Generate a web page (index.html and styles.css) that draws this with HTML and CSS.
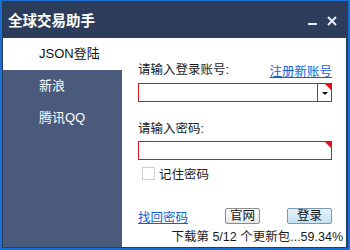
FILE: index.html
```html
<!DOCTYPE html>
<html lang="zh">
<head>
  <meta charset="UTF-8" />
  <title>全球交易助手</title>
  <link rel="stylesheet" href="styles.css">
</head>
<body>
  <div class="frame">
    <div class="window">
      <div class="titlebar">
        <span class="title">全球交易助手</span>
        <div class="controls">
          <span class="min"></span>
          <svg class="close" width="10" height="10" viewBox="0 0 10 10">
            <path d="M1 1 L9 9 M9 1 L1 9" stroke="#e8ecf2" stroke-width="2"/>
          </svg>
        </div>
      </div>
      <div class="content">
        <div class="sidebar">
          <div class="tab active">JSON登陆</div>
          <div class="tab">新浪</div>
          <div class="tab">腾讯QQ</div>
        </div>
        <div class="main">
          <div class="form">
            <div class="label-row">
              <span class="label">请输入登录账号:</span>
              <a class="link" href="#">注册新账号</a>
            </div>
            <div class="input select">
              <span class="corner"></span>
              <span class="drop"><span class="arrow"></span></span>
            </div>
            <div class="label pw-label">请输入密码:</div>
            <div class="input">
              <span class="corner"></span>
            </div>
            <label class="remember">
              <span class="check"></span>记住密码
            </label>
            <div class="actions">
              <a class="link" href="#">找回密码</a>
              <button class="btn site">官网</button>
              <button class="btn login">登录</button>
            </div>
          </div>
          <div class="status">下载第 5/12 个更新包...59.34%</div>
        </div>
      </div>
    </div>
  </div>
</body>
</html>
```

FILE: styles.css
```css
* {
  box-sizing: border-box;
}

body {
  margin: 0;
  font-family: "Liberation Sans", "Noto Sans CJK SC", sans-serif;
  font-size: 12.5px;
  color: #1b1b1b;
}

.frame {
  width: 350px;
  height: 250px;
  background: #1a6fd0;
  padding: 1px 2px 2px 2px;
}

.window {
  height: 100%;
  background: #2c3d5b;
  padding: 0 2px 1px 1px;
  display: flex;
  flex-direction: column;
}

.titlebar {
  height: 37px;
  display: flex;
  align-items: center;
  justify-content: space-between;
  padding: 0 9px 0 5px;
  color: #fff;
}

.title {
  font-size: 14.5px;
  font-weight: bold;
}

.controls {
  display: flex;
  align-items: center;
  gap: 10px;
  padding-top: 2px;
}

.min {
  width: 9px;
  height: 2px;
  background: #e8ecf2;
  margin-top: 6px;
}

.content {
  flex: 1;
  display: flex;
  background: #fff;
}

.sidebar {
  width: 119px;
  background: #4a5a7c;
}

.tab {
  height: 32px;
  line-height: 31px;
  padding-left: 36px;
  color: #fff;
  font-size: 13px;
}

.tab.active {
  background: #fff;
  color: #111;
}

.main {
  flex: 1;
  display: flex;
  flex-direction: column;
  padding: 23px 2px 0 16px;
}

.form {
  margin-right: 12px;
  display: flex;
  flex-direction: column;
}

.label-row {
  display: flex;
  justify-content: space-between;
  align-items: center;
  height: 18px;
}

.label {
  line-height: 18px;
}

.link {
  color: #1560d0;
  text-decoration: underline;
}

.input {
  position: relative;
  height: 19px;
  border: 1px solid #e0101c;
  margin-top: 4px;
}

.corner {
  position: absolute;
  top: 0;
  right: 0;
  width: 0;
  height: 0;
  border-top: 6px solid #e0101c;
  border-left: 6px solid transparent;
}

.drop {
  position: absolute;
  right: 0;
  top: 0;
  bottom: 0;
  width: 14px;
  border-left: 1px solid #e0101c;
  display: flex;
  align-items: center;
  justify-content: center;
}

.arrow {
  width: 0;
  height: 0;
  border-top: 3px solid #111;
  border-left: 3px solid transparent;
  border-right: 3px solid transparent;
  margin-top: 1px;
}

.pw-label {
  margin-top: 19px;
  line-height: 16px;
}

.remember {
  display: flex;
  align-items: center;
  height: 14px;
  margin-top: 6px;
  padding-left: 4px;
  gap: 4px;
}

.check {
  width: 13px;
  height: 13px;
  border: 1px solid #c9d0da;
  background: #fff;
}

.actions {
  display: flex;
  align-items: center;
  margin-top: 28px;
  height: 16px;
}

.actions .link {
  margin-right: auto;
}

.btn {
  height: 16px;
  padding: 0;
  font: inherit;
  line-height: 14px;
  color: #111;
  border-radius: 2px;
  cursor: pointer;
}

.site {
  width: 35px;
  border: 1px solid #8d8d8d;
  background: linear-gradient(#fdfdfd, #e6e6e6);
  margin-right: 27px;
}

.login {
  width: 45px;
  border: 1px solid #7a98b0;
  background: linear-gradient(#e6f3fb, #c2e1f2);
}

.status {
  text-align: right;
  margin-top: 5px;
  line-height: 16px;
  padding-right: 1px;
}
```
